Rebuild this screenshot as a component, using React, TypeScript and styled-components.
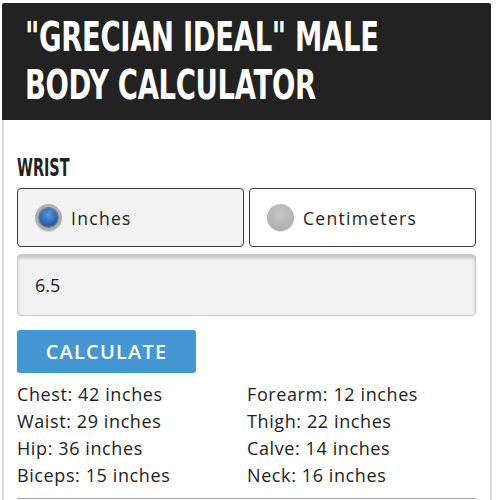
import React from "react";
import styled, { createGlobalStyle } from "styled-components";

const Global = createGlobalStyle`
  html, body { margin: 0; padding: 0; background: #fff; }
  body { font-family: "Open Sans", "Liberation Sans", sans-serif; }
`;

const Page = styled.div`
  width: 499px;
  padding: 3px 0 0 2px;
  box-sizing: border-box;
`;

const Header = styled.header`
  width: 489px;
  height: 117px;
  box-sizing: border-box;
  background: #222222;
  border-radius: 2px 2px 0 0;
  padding: 10px 0 0 23px;
  overflow: hidden;
`;

const Title = styled.h1`
  margin: 0;
  color: #fff;
  font-family: "DejaVu Sans", sans-serif;
  font-weight: 700;
  font-size: 41px;
  line-height: 48px;
  letter-spacing: -0.5px;
  text-transform: uppercase;
  white-space: nowrap;
  transform: scaleX(0.67);
  transform-origin: left top;
`;

const Panel = styled.section`
  width: 490px;
  box-sizing: border-box;
  border-left: 2px solid #dcdcdc;
  border-right: 2px solid #dcdcdc;
  padding: 35px 14px 14px 13px;
`;

const Label = styled.h2`
  margin: 0 0 7px 0;
  font-family: "DejaVu Sans", sans-serif;
  font-weight: 700;
  font-size: 24px;
  line-height: 26px;
  color: #222;
  white-space: nowrap;
  transform: scaleX(0.6);
  transform-origin: left top;
`;

const RadioRow = styled.div`
  display: grid;
  grid-template-columns: 1fr 1fr;
  gap: 5px;
`;

const RadioBox = styled.label<{ $active?: boolean }>`
  display: flex;
  align-items: center;
  gap: 9px;
  height: 59px;
  box-sizing: border-box;
  padding-left: 17px;
  border: 1px solid #3a3a3a;
  border-radius: 4px;
  background: ${(p) => (p.$active ? "#f2f2f2" : "#fff")};
  font-size: 17.5px;
  letter-spacing: 1.3px;
  color: #222;
`;

const Dot = styled.span<{ $active?: boolean }>`
  position: relative;
  width: 27px;
  height: 27px;
  border-radius: 50%;
  box-sizing: border-box;
  flex: none;
  background: ${(p) =>
    p.$active
      ? "radial-gradient(circle at 50% 40%, #c2c2c2 0%, #a2a2a2 100%)"
      : "radial-gradient(circle at 50% 35%, #c6c6c6 0%, #a8a8a8 100%)"};
  box-shadow: 0 1px 1px rgba(0, 0, 0, 0.12);
  &::after {
    content: "";
    display: ${(p) => (p.$active ? "block" : "none")};
    position: absolute;
    left: 4px;
    top: 4px;
    width: 19px;
    height: 19px;
    border-radius: 50%;
    background: radial-gradient(circle at 50% 35%, #5b98e0 0%, #2f68b6 55%, #1c4688 100%);
    box-shadow: 0 0 0 1px #7a7a7a;
  }
`;

const Input = styled.div`
  margin-top: 7px;
  height: 62px;
  box-sizing: border-box;
  border: 1px solid #c9c9c9;
  border-radius: 4px;
  background: #f1f1f1;
  box-shadow: inset 0 3px 3px rgba(0, 0, 0, 0.18);
  display: flex;
  align-items: center;
  padding-left: 17px;
  font-size: 18px;
  color: #222;
`;

const Button = styled.button`
  margin-top: 14px;
  width: 179px;
  height: 43px;
  border: none;
  border-radius: 3px;
  background: #4497d2;
  color: #fff;
  font-family: "Open Sans", "Liberation Sans", sans-serif;
  font-size: 20px;
  font-weight: 600;
  letter-spacing: 1.2px;
  padding: 0;
  display: block;
`;

const Results = styled.div`
  display: grid;
  grid-template-columns: 230px 1fr;
  margin-top: 8px;
  padding-bottom: 9px;
  border-bottom: 1px solid #a0a0a0;
`;

const Result = styled.div`
  font-size: 18px;
  line-height: 27px;
  color: #222;
  letter-spacing: 0.6px;
  white-space: nowrap;
`;

const results = [
  ["Chest", 42],
  ["Forearm", 12],
  ["Waist", 29],
  ["Thigh", 22],
  ["Hip", 36],
  ["Calve", 14],
  ["Biceps", 15],
  ["Neck", 16],
] as const;

export default function App() {
  return (
    <Page>
      <Global />
      <Header>
        <Title>
          "Grecian Ideal" Male
          <br />
          Body Calculator
        </Title>
      </Header>
      <Panel>
        <Label>WRIST</Label>
        <RadioRow>
          <RadioBox $active>
            <Dot $active />
            Inches
          </RadioBox>
          <RadioBox>
            <Dot />
            Centimeters
          </RadioBox>
        </RadioRow>
        <Input>6.5</Input>
        <Button>CALCULATE</Button>
        <Results>
          {results.map(([k, v]) => (
            <Result key={k}>
              {k}: {v} inches
            </Result>
          ))}
        </Results>
      </Panel>
    </Page>
  );
}
